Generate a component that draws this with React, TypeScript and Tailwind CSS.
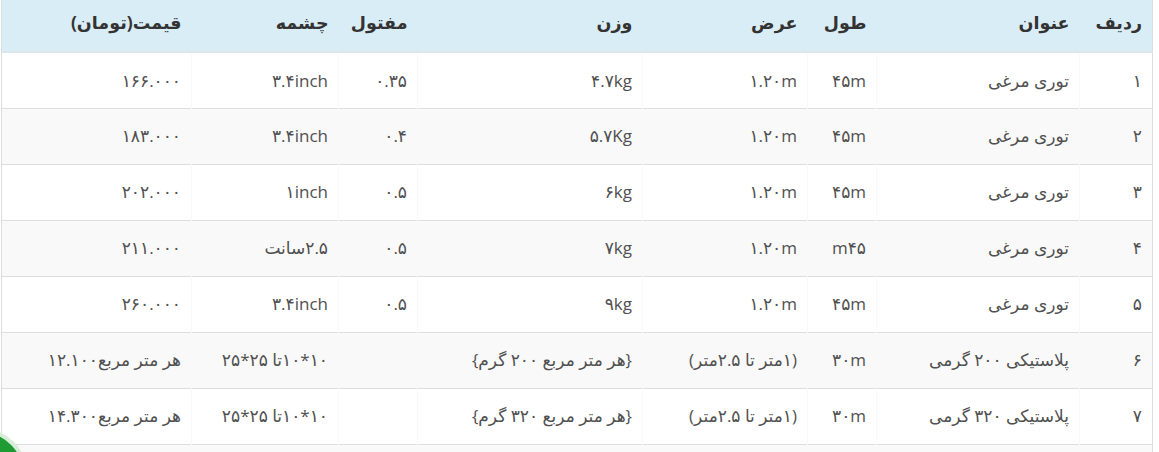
import React from "react";

// ردیف‌های جدول قیمت توری
const rows: string[][] = [
  ["۱", "توری مرغی", "۴۵m", "۱.۲۰m", "۴.۷kg", "۰.۳۵", "۳.۴inch", "۱۶۶.۰۰۰"],
  ["۲", "توری مرغی", "۴۵m", "۱.۲۰m", "۵.۷Kg", "۰.۴", "۳.۴inch", "۱۸۳.۰۰۰"],
  ["۳", "توری مرغی", "۴۵m", "۱.۲۰m", "۶kg", "۰.۵", "۱inch", "۲۰۲.۰۰۰"],
  ["۴", "توری مرغی", "m۴۵", "۱.۲۰m", "۷kg", "۰.۵", "۲.۵سانت", "۲۱۱.۰۰۰"],
  ["۵", "توری مرغی", "۴۵m", "۱.۲۰m", "۹kg", "۰.۵", "۳.۴inch", "۲۶۰.۰۰۰"],
  [
    "۶",
    "پلاستیکی ۲۰۰ گرمی",
    "۳۰m",
    "(۱متر تا ۲.۵متر)",
    "{هر متر مربع ۲۰۰ گرم}",
    "",
    "۱۰*۱۰تا ۲۵*۲۵",
    "هر متر مربع۱۲.۱۰۰",
  ],
  [
    "۷",
    "پلاستیکی ۳۲۰ گرمی",
    "۳۰m",
    "(۱متر تا ۲.۵متر)",
    "{هر متر مربع ۳۲۰ گرم}",
    "",
    "۱۰*۱۰تا ۲۵*۲۵",
    "هر متر مربع۱۴.۳۰۰",
  ],
  ["", "", "", "", "", "", "", ""],
];

const headers = ["ردیف", "عنوان", "طول", "عرض", "وزن", "مفتول", "چشمه", "قیمت(تومان)"];
const widths = ["w-[73px]", "w-[203px]", "w-[69px]", "w-[165px]", "w-[225px]", "w-[79px]", "w-[147px]", "w-[190px]"];

const App: React.FC = () => {
  return (
    <div className="relative h-[452px] w-full overflow-hidden bg-white font-['Open_Sans','DejaVu_Sans',sans-serif]">
      <div dir="rtl" className="pr-[6px] pl-[2px]">
        <table className="w-[1151px] table-fixed border-collapse border-x border-[#ddd] text-[17px]">
          <colgroup>
            {widths.map((w, i) => (
              <col key={i} className={w} />
            ))}
          </colgroup>
          <thead>
            <tr className="h-[52px] bg-[#d9edf7]">
              {headers.map((h) => (
                <th
                  key={h}
                  className="border-b-2 border-[#dde6eb] px-[10px] pb-[16px] align-bottom text-right text-[17.5px] font-bold text-[#333]"
                >
                  {h}
                </th>
              ))}
            </tr>
          </thead>
          <tbody>
            {rows.map((r, i) => (
              <tr
                key={i}
                className={`h-[56px] border-b border-[#ddd] ${i % 2 === 1 ? "bg-[#f9f9f9]" : "bg-white"}`}
              >
                {r.map((c, j) => (
                  <td
                    key={j}
                    className="border-l border-[#f9f9f9] px-[10px] text-right align-middle text-[#505050] last:border-l-0"
                  >
                    {c}
                  </td>
                ))}
              </tr>
            ))}
          </tbody>
        </table>
      </div>

      {/* دکمه شناور سبز */}
      <div className="absolute left-[-68px] top-[428px] h-[96px] w-[96px] rounded-full bg-[#d7ecd9] p-[4px]">
        <div className="h-full w-full rounded-full bg-[#1e9b32]" />
      </div>
    </div>
  );
};

export default App;
